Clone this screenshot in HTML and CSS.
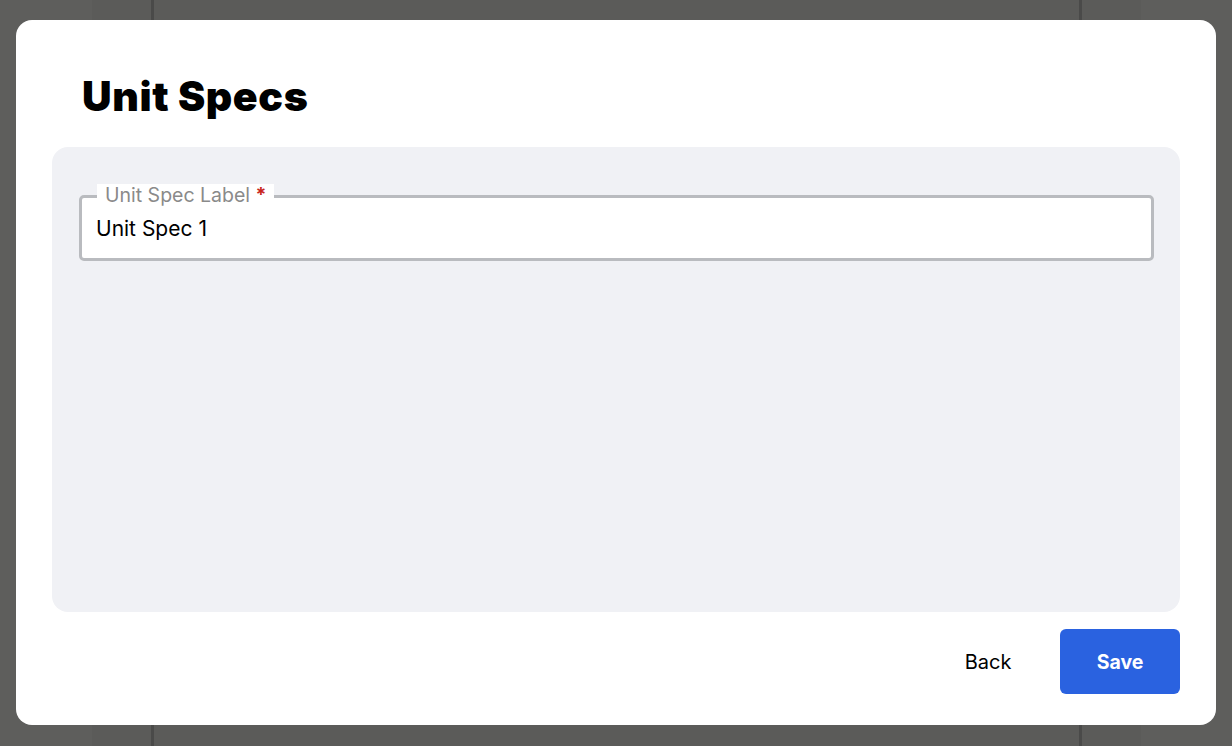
FILE: index.html
```html
<!DOCTYPE html>
<html lang="en">
<head>
<meta charset="utf-8">
<title>Unit Specs</title>
<link rel="stylesheet" href="styles.css">
</head>
<body>
<div class="backdrop">
  <div class="strip strip-left"></div>
  <div class="line line-left"></div>
  <div class="spacer"></div>
  <div class="line line-right"></div>
  <div class="strip strip-right"></div>
</div>
<div class="modal">
  <h1 class="title">Unit Specs</h1>
  <div class="panel">
    <div class="field">
      <label class="field-label">Unit Spec Label <span class="req">*</span></label>
      <div class="field-input">Unit Spec 1</div>
    </div>
  </div>
  <div class="footer">
    <button class="btn btn-back">Back</button>
    <button class="btn btn-save">Save</button>
  </div>
</div>
</body>
</html>
```

FILE: styles.css
```css
* { box-sizing: border-box; }
html, body {
  margin: 0;
  height: 100%;
}
body {
  background: #5b5b59;
  font-family: Inter, "Noto Sans", sans-serif;
  overflow: hidden;
}
.backdrop {
  display: flex;
  height: 100%;
}
.strip { width: 92px; background: #5e5e5c; }
.strip-right { width: 91px; margin-left: auto; }
.line { width: 3px; background: #4a4a49; }
.line-left { margin-left: 59px; }
.spacer { flex: 1; }
.line-right { margin-right: 59px; }

.modal {
  position: fixed;
  left: 16px;
  top: 20px;
  width: 1200px;
  height: 705px;
  background: #ffffff;
  border-radius: 16px;
  padding: 52px 36px 31px;
  display: flex;
  flex-direction: column;
}
.title {
  margin: 0 0 27px 30px;
  font-size: 41px;
  line-height: 48px;
  font-weight: 900;
  color: #000;
  letter-spacing: 0.6px;
}
.panel {
  flex: 1;
  background: #f0f1f5;
  border-radius: 16px;
  padding: 48px 26px 0 27px;
}
.field {
  position: relative;
}
.field-input {
  height: 66px;
  border: 3px solid #b9bbbf;
  border-radius: 5px;
  background: #fff;
  padding: 0 14px;
  display: flex;
  align-items: center;
  font-size: 21px;
  color: #000;
}
.field-label {
  position: absolute;
  left: 18px;
  top: -11px;
  background: #fff;
  padding: 0 8px;
  font-size: 19.5px;
  line-height: 22px;
  color: #8a8a8a;
}
.req { color: #c8261d; font-weight: 700; }
.footer {
  margin-top: 17px;
  display: flex;
  justify-content: flex-end;
  gap: 12px;
}
.btn {
  width: 120px;
  height: 65px;
  border: none;
  border-radius: 6px;
  font-family: Inter, "Noto Sans", sans-serif;
  font-size: 20px;
  cursor: pointer;
}
.btn-back { background: transparent; color: #000; }
.btn-save { background: #2a62e0; color: #fff; font-weight: 700; font-size: 19.5px; }
```
